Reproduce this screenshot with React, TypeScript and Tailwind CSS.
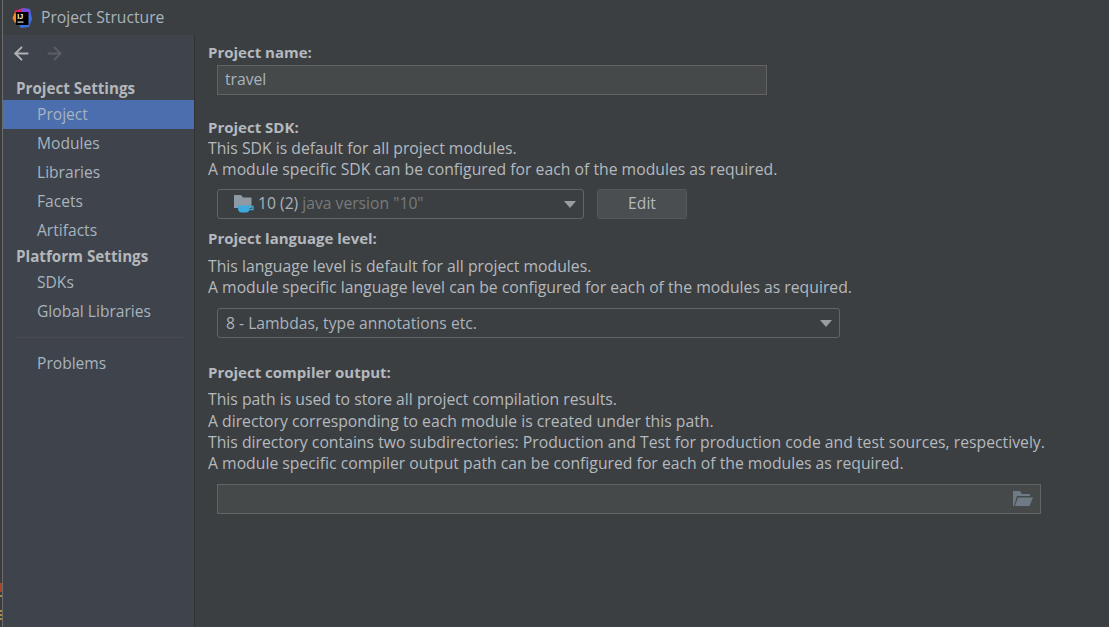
import { ArrowLeft, ArrowRight } from 'lucide-react';

const font = { fontFamily: '"Open Sans", "Noto Sans", sans-serif' };

function AppLogo() {
    return (
        <svg width="20" height="20" viewBox="0 0 20 20" className="shrink-0">
            <path d="M3 4 L0.5 10 L3 15 L7 11 Z" fill="#f58a1f" />
            <path d="M2 3 L11 0 L15 3 L6 9 Z" fill="#e0245e" />
            <path d="M11 0 L18 1 L20 11 L17 19 L9 20 L6 16 Z" fill="#3f6fe0" />
            <path d="M8 1 L14 0.5 L19 4 L16 8 Z" fill="#7a4be0" />
            <rect x="4" y="4" width="12.5" height="13" fill="#000" />
            <rect x="5.5" y="13.5" width="6" height="1.2" fill="#d8d8d8" />
            <text x="5.3" y="11" fontSize="7" fontWeight="700" fill="#fff" fontFamily="Liberation Sans">IJ</text>
        </svg>
    );
}

function SdkIcon() {
    return (
        <svg width="20" height="20" viewBox="0 0 20 20" className="shrink-0">
            <path d="M0 1 H7 L9 3.5 H17.5 V14 H0 Z" fill="#8e99a3" />
            <path d="M4 11.5 H15.5 V14.5 C15.5 17 14 18.5 12 18.5 H7.5 C5.5 18.5 4 17 4 14.5 Z" fill="#3fa9dc" />
            <path d="M15 12.5 H19 V15.5 H15" fill="none" stroke="#3fa9dc" strokeWidth="1.3" />
        </svg>
    );
}

function OpenFolderIcon() {
    return (
        <svg width="20" height="16" viewBox="0 0 20 16">
            <path d="M0 0 H7 L9 3 H17 V5 H4 L1 15 H0 Z" fill="#6e7a84" />
            <path d="M5 6.5 H20 L16.5 15 H1.8 Z" fill="#6e7a84" />
        </svg>
    );
}

function Caret() {
    return <div className="w-0 h-0 border-l-[6px] border-r-[6px] border-t-[7px] border-l-transparent border-r-transparent border-t-[#9a9da0]" />;
}

function NavItem({ label, active, short }: { label: string; active?: boolean; short?: boolean }) {
    return (
        <div className={`${short ? 'h-[28px]' : 'h-[29px]'} pl-[34px] leading-[29px] text-[15.6px] text-[#a9b3bd] ${active ? 'bg-[#4b6eaf]' : ''}`}>
            {label}
        </div>
    );
}

function NavHeading({ label }: { label: string }) {
    return <div className="h-[24px] pl-[13px] leading-[24px] text-[15.2px] font-bold text-[#b4b7ba]">{label}</div>;
}

function Heading({ label, className }: { label: string; className?: string }) {
    return <div className={`h-[21px] leading-[21px] text-[15px] font-bold text-[#b4b9bf] ${className ?? ''}`}>{label}</div>;
}

function Line({ text, className }: { text: string; className?: string }) {
    return <div className={`h-[21px] leading-[21px] text-[15.75px] text-[#b4b9bf] whitespace-nowrap ${className ?? ''}`}>{text}</div>;
}

// window edge: the desktop behind shows through here
function WindowEdge() {
    return (
        <div className="w-[3px] shrink-0 flex flex-col justify-end bg-[#3a3c3e] border-r border-[#6a6c6e]">
            <div className="h-[9px] bg-[#a8452a]" />
            <div className="h-[2px] mt-[3px] bg-[#a08a50]" />
            <div className="h-[2px] mt-[13px] bg-[#b08a40]" />
            <div className="h-[2px] mt-[2px] bg-[#b08a40]" />
            <div className="h-[2px] mt-[2px] mb-[7px] bg-[#b08a40]" />
        </div>
    );
}

export default function App() {
    return (
        <div className="w-[1109px] h-[627px] overflow-hidden flex bg-[#3c3f41]" style={font}>
            <WindowEdge />
            <div className="flex-1 min-w-0 flex flex-col">
                <div className="h-[35px] shrink-0 flex items-center pl-[9px] gap-[9px] text-[15.7px] text-[#a9b3bd]">
                    <AppLogo />
                    <span>Project Structure</span>
                </div>
                <div className="flex flex-1 min-h-0">
                    <div className="w-[192px] shrink-0 bg-[#3e434c] border-r border-[#323232]">
                        <div className="h-[41px] flex items-center pl-[8px] gap-[12px]">
                            <ArrowLeft size={21} strokeWidth={2.2} className="text-[#b0b3b6] -translate-y-[2px]" />
                            <ArrowRight size={21} strokeWidth={2.2} className="text-[#5c5f62] -translate-y-[2px]" />
                        </div>
                        <NavHeading label="Project Settings" />
                        <NavItem label="Project" active />
                        <NavItem label="Modules" />
                        <NavItem label="Libraries" />
                        <NavItem label="Facets" />
                        <NavItem label="Artifacts" short />
                        <NavHeading label="Platform Settings" />
                        <NavItem label="SDKs" />
                        <NavItem label="Global Libraries" />
                        <div className="h-[23px] flex items-center pl-[13px] pr-[10px]">
                            <div className="w-full h-px bg-[#4a4c50]" />
                        </div>
                        <NavItem label="Problems" />
                    </div>
                    <div className="flex-1 pl-[13px] pt-[7px]">
                        <Heading label="Project name:" />
                        <div className="ml-[9px] mt-[2px] w-[550px] h-[30px] border border-[#646464] bg-[#45494a] pl-[7px] leading-[27px] text-[15.7px] text-[#a9b3bd]">travel</div>

                        <Heading label="Project SDK:" className="mt-[22px]" />
                        <Line text="This SDK is default for all project modules." />
                        <Line text="A module specific SDK can be configured for each of the modules as required." />
                        <div className="flex ml-[9px] mt-[9px] gap-[13px]">
                            <div className="w-[367px] h-[30px] border border-[#646464] rounded-[3px] flex items-center pl-[16px] pr-[7px] text-[15.7px]">
                                <SdkIcon />
                                <span className="ml-[4px] text-[#a9b3bd]">10 (2)</span>
                                <span className="ml-[4px] text-[#777a7c]">java version "10"</span>
                                <div className="ml-auto"><Caret /></div>
                            </div>
                            <div className="w-[90px] h-[30px] bg-[#4b4e50] border border-[#565a5c] rounded-[3px] flex items-center justify-center text-[15.7px] text-[#b4b9bf]">Edit</div>
                        </div>

                        <Heading label="Project language level:" className="mt-[9px]" />
                        <div className="mt-[7px]">
                            <Line text="This language level is default for all project modules." />
                            <Line text="A module specific language level can be configured for each of the modules as required." />
                        </div>
                        <div className="ml-[9px] mt-[10px] w-[623px] h-[30px] border border-[#646464] rounded-[3px] flex items-center pl-[8px] pr-[7px] text-[15.7px] text-[#a9b3bd]">
                            <span className="translate-y-px">8 - Lambdas, type annotations etc.</span>
                            <div className="ml-auto"><Caret /></div>
                        </div>

                        <Heading label="Project compiler output:" className="mt-[24px]" />
                        <div className="mt-[6px]">
                            <Line text="This path is used to store all project compilation results." className="mb-px" />
                            <Line text="A directory corresponding to each module is created under this path." />
                            <Line text="This directory contains two subdirectories: Production and Test for production code and test sources, respectively." />
                            <Line text="A module specific compiler output path can be configured for each of the modules as required." />
                        </div>
                        <div className="ml-[9px] mt-[10px] w-[824px] h-[30px] border border-[#646464] bg-[#45494a] flex items-center justify-end pr-[7px]">
                            <OpenFolderIcon />
                        </div>
                    </div>
                </div>
            </div>
        </div>
    );
}
